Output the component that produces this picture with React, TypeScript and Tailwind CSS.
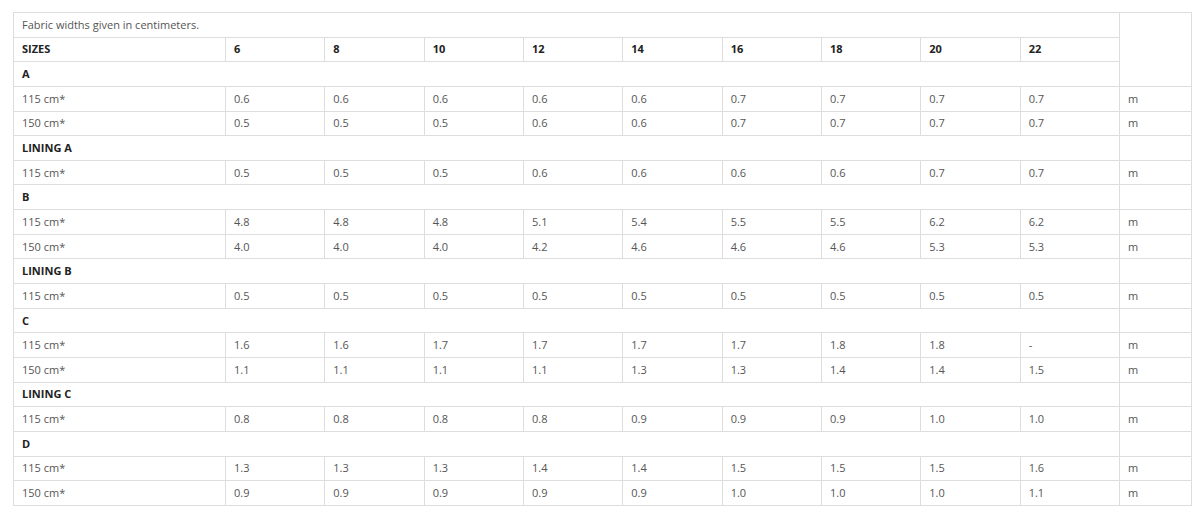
const SIZES = ['6', '8', '10', '12', '14', '16', '18', '20', '22'];

type Group = { name: string; rows: { width: string; values: string[] }[] };

const GROUPS: Group[] = [
  {
    name: 'A',
    rows: [
      { width: '115 cm*', values: ['0.6', '0.6', '0.6', '0.6', '0.6', '0.7', '0.7', '0.7', '0.7'] },
      { width: '150 cm*', values: ['0.5', '0.5', '0.5', '0.6', '0.6', '0.7', '0.7', '0.7', '0.7'] },
    ],
  },
  {
    name: 'LINING A',
    rows: [{ width: '115 cm*', values: ['0.5', '0.5', '0.5', '0.6', '0.6', '0.6', '0.6', '0.7', '0.7'] }],
  },
  {
    name: 'B',
    rows: [
      { width: '115 cm*', values: ['4.8', '4.8', '4.8', '5.1', '5.4', '5.5', '5.5', '6.2', '6.2'] },
      { width: '150 cm*', values: ['4.0', '4.0', '4.0', '4.2', '4.6', '4.6', '4.6', '5.3', '5.3'] },
    ],
  },
  {
    name: 'LINING B',
    rows: [{ width: '115 cm*', values: ['0.5', '0.5', '0.5', '0.5', '0.5', '0.5', '0.5', '0.5', '0.5'] }],
  },
  {
    name: 'C',
    rows: [
      { width: '115 cm*', values: ['1.6', '1.6', '1.7', '1.7', '1.7', '1.7', '1.8', '1.8', '-'] },
      { width: '150 cm*', values: ['1.1', '1.1', '1.1', '1.1', '1.3', '1.3', '1.4', '1.4', '1.5'] },
    ],
  },
  {
    name: 'LINING C',
    rows: [{ width: '115 cm*', values: ['0.8', '0.8', '0.8', '0.8', '0.9', '0.9', '0.9', '1.0', '1.0'] }],
  },
  {
    name: 'D',
    rows: [
      { width: '115 cm*', values: ['1.3', '1.3', '1.3', '1.4', '1.4', '1.5', '1.5', '1.5', '1.6'] },
      { width: '150 cm*', values: ['0.9', '0.9', '0.9', '0.9', '0.9', '1.0', '1.0', '1.0', '1.1'] },
    ],
  },
];

const cell = 'border border-[#dddddd] px-2 py-0 align-middle text-left';

export default function App() {
  return (
    <div className="bg-white min-h-[517px] pt-3 pl-[13px] font-['Open_Sans',sans-serif] text-[11px] leading-[16px] text-[#555555]">
      <table className="table-fixed border-collapse w-[1178px]">
        <colgroup>
          <col className="w-[212px]" />
          {SIZES.map((s) => (
            <col key={s} className="w-[99.33px]" />
          ))}
          <col className="w-[72px]" />
        </colgroup>
        <tbody>
          <tr className="h-[24.65px]">
            <td colSpan={10} className={cell}>
              Fabric widths given in centimeters.
            </td>
            <td rowSpan={3} className={cell}></td>
          </tr>
          <tr className="h-[24.65px]">
            <td className={`${cell} font-bold text-[#222222]`}>SIZES</td>
            {SIZES.map((s) => (
              <td key={s} className={`${cell} font-bold text-[#222222]`}>
                {s}
              </td>
            ))}
          </tr>
          {GROUPS.map((g, gi) => (
            <GroupRows key={g.name} group={g} first={gi === 0} />
          ))}
        </tbody>
      </table>
    </div>
  );
}

function GroupRows({ group, first }: { group: Group; first: boolean }) {
  return (
    <>
      <tr className="h-[24.65px]">
        <td colSpan={10} className={`${cell} font-bold text-[#222222]`}>
          {group.name}
        </td>
        {!first && <td className={cell}></td>}
      </tr>
      {group.rows.map((r, i) => (
        <tr key={i} className="h-[24.65px]">
          <td className={cell}>{r.width}</td>
          {r.values.map((v, j) => (
            <td key={j} className={cell}>
              {v}
            </td>
          ))}
          <td className={cell}>m</td>
        </tr>
      ))}
    </>
  );
}
